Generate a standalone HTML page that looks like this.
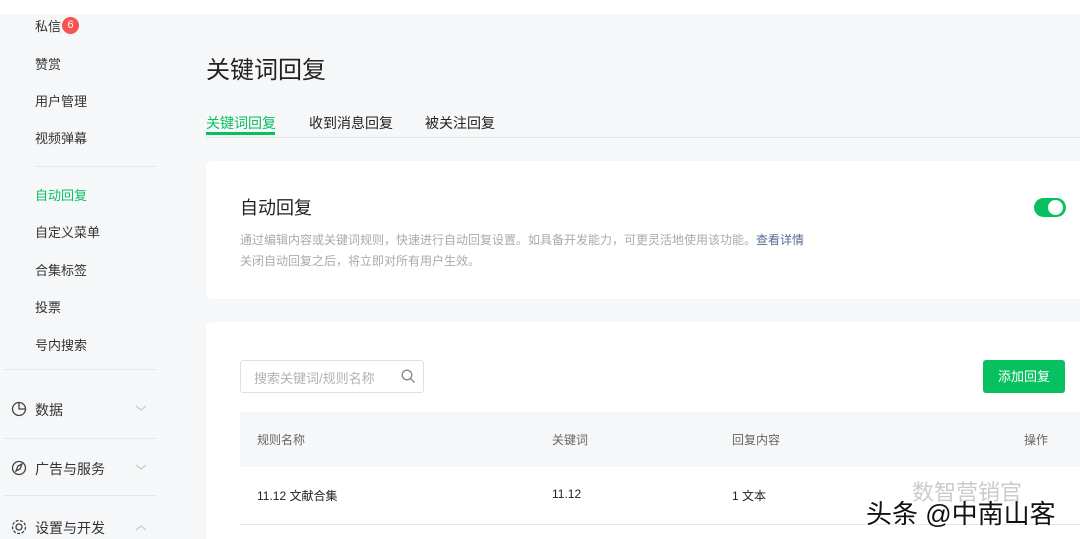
<!DOCTYPE html><html><head><meta charset="utf-8"><style>
*{margin:0;padding:0;box-sizing:border-box}
html,body{width:1080px;height:539px;overflow:hidden}
body{background:#f6f7f8;font-family:"Liberation Sans","Noto Sans CJK SC",sans-serif;color:#333;position:relative}
.a{position:absolute;white-space:nowrap}
.s{font-size:13px;color:#333;left:35px}
.hr{position:absolute;height:1px;background:#e6e7e8}
.card{position:absolute;background:#fff;border-radius:6px}
</style></head><body>
<div class="a" style="left:0;top:0;width:1080px;height:14px;background:#fff"></div>
<div class="a s" style="top:16px">私信</div>
<div class="a" style="left:62px;top:17px;width:17px;height:17px;border-radius:50%;background:#fa5151;color:#fff;font-size:11px;text-align:center;line-height:17px">6</div>
<div class="a s" style="top:54px">赞赏</div>
<div class="a s" style="top:91px">用户管理</div>
<div class="a s" style="top:128px">视频弹幕</div>
<div class="hr" style="left:35px;top:166px;width:121px"></div>
<div class="a s" style="top:185px;color:#07c160">自动回复</div>
<div class="a s" style="top:222px">自定义菜单</div>
<div class="a s" style="top:260px">合集标签</div>
<div class="a s" style="top:297px">投票</div>
<div class="a s" style="top:335px">号内搜索</div>
<div class="hr" style="left:4px;top:369px;width:152px"></div>
<div class="a" style="left:35px;top:400px;font-size:14px">数据</div>
<div class="hr" style="left:4px;top:438px;width:152px"></div>
<div class="a" style="left:35px;top:459px;font-size:14px">广告与服务</div>
<div class="hr" style="left:4px;top:495px;width:152px"></div>
<div class="a" style="left:35px;top:518px;font-size:14px">设置与开发</div>
<svg class="a" style="left:0;top:395px" width="160" height="144" fill="none" stroke="#444" stroke-width="1.3">
<circle cx="19" cy="14" r="6.5"/><path d="M19 7.5V14H25.5"/>
<circle cx="19" cy="73" r="6.5"/><path d="M16 76l2-5 4-2-2 5z"/>
<circle cx="19" cy="132" r="3"/><circle cx="19" cy="132" r="6.5" stroke-dasharray="3 1.5"/>
<path d="M136 11l5 4 5-4M136 70l5 4 5-4M136 135l5-4 5 4" stroke="#ccc"/>
</svg>
<div class="a" style="left:206px;top:50px;font-size:24px;color:#222">关键词回复</div>
<div class="a" style="left:206px;top:113px;font-size:14px;color:#07c160">关键词回复</div>
<div class="a" style="left:309px;top:113px;font-size:14px;color:#222">收到消息回复</div>
<div class="a" style="left:425px;top:113px;font-size:14px;color:#222">被关注回复</div>
<div class="hr" style="left:206px;top:137px;width:874px;background:#e2e3e4"></div>
<div class="a" style="left:206px;top:132px;width:69px;height:3px;background:#07c160"></div>
<div class="card" style="left:206px;top:161px;width:880px;height:138px"></div>
<div class="a" style="left:240px;top:194px;font-size:18px;color:#222">自动回复</div>
<div class="a" style="left:240px;top:231px;font-size:12px;color:#aaa">通过编辑内容或关键词规则，快速进行自动回复设置。如具备开发能力，可更灵活地使用该功能。<span style="color:#576b95">查看详情</span></div>
<div class="a" style="left:240px;top:252px;font-size:12px;color:#aaa">关闭自动回复之后，将立即对所有用户生效。</div>
<div class="a" style="left:1034px;top:198px;width:32px;height:19px;border-radius:10px;background:#07c160"></div>
<div class="a" style="left:1048px;top:200px;width:15px;height:15px;border-radius:50%;background:#fff"></div>
<div class="card" style="left:206px;top:322px;width:880px;height:230px"></div>
<div class="a" style="left:240px;top:360px;width:184px;height:33px;border:1px solid #e0e0e0;border-radius:3px"></div>
<div class="a" style="left:254px;top:368px;font-size:13px;color:#b2b2b2">搜索关键词/规则名称</div>
<svg class="a" style="left:401px;top:369px" width="15" height="15" fill="none" stroke="#888" stroke-width="1.3"><circle cx="6" cy="6" r="4.8"/><path d="M9.5 9.5l4 4"/></svg>
<div class="a" style="left:983px;top:360px;width:82px;height:33px;background:#07c160;border-radius:3px;color:#fff;font-size:13px;text-align:center;line-height:33px">添加回复</div>
<div class="a" style="left:240px;top:412px;width:840px;height:55px;background:#f6f7f8"></div>
<div class="a" style="left:257px;top:431px;font-size:12px;color:#666">规则名称</div>
<div class="a" style="left:552px;top:431px;font-size:12px;color:#666">关键词</div>
<div class="a" style="left:732px;top:431px;font-size:12px;color:#666">回复内容</div>
<div class="a" style="left:1024px;top:431px;font-size:12px;color:#666">操作</div>
<div class="a" style="left:257px;top:487px;font-size:12px;color:#222">11.12 文献合集</div>
<div class="a" style="left:552px;top:487px;font-size:12px;color:#222">11.12</div>
<div class="a" style="left:732px;top:487px;font-size:12px;color:#222">1 文本</div>
<div class="hr" style="left:240px;top:524px;width:840px"></div>
<div class="a" style="left:912px;top:475px;font-size:22px;color:rgba(190,190,190,.8)">数智营销官</div>
<div class="a" style="left:866px;top:494px;font-size:26px;color:#111;text-shadow:1px 1px 0 #fff,-1px -1px 0 #fff">头条 @中南山客</div>
</body></html>
